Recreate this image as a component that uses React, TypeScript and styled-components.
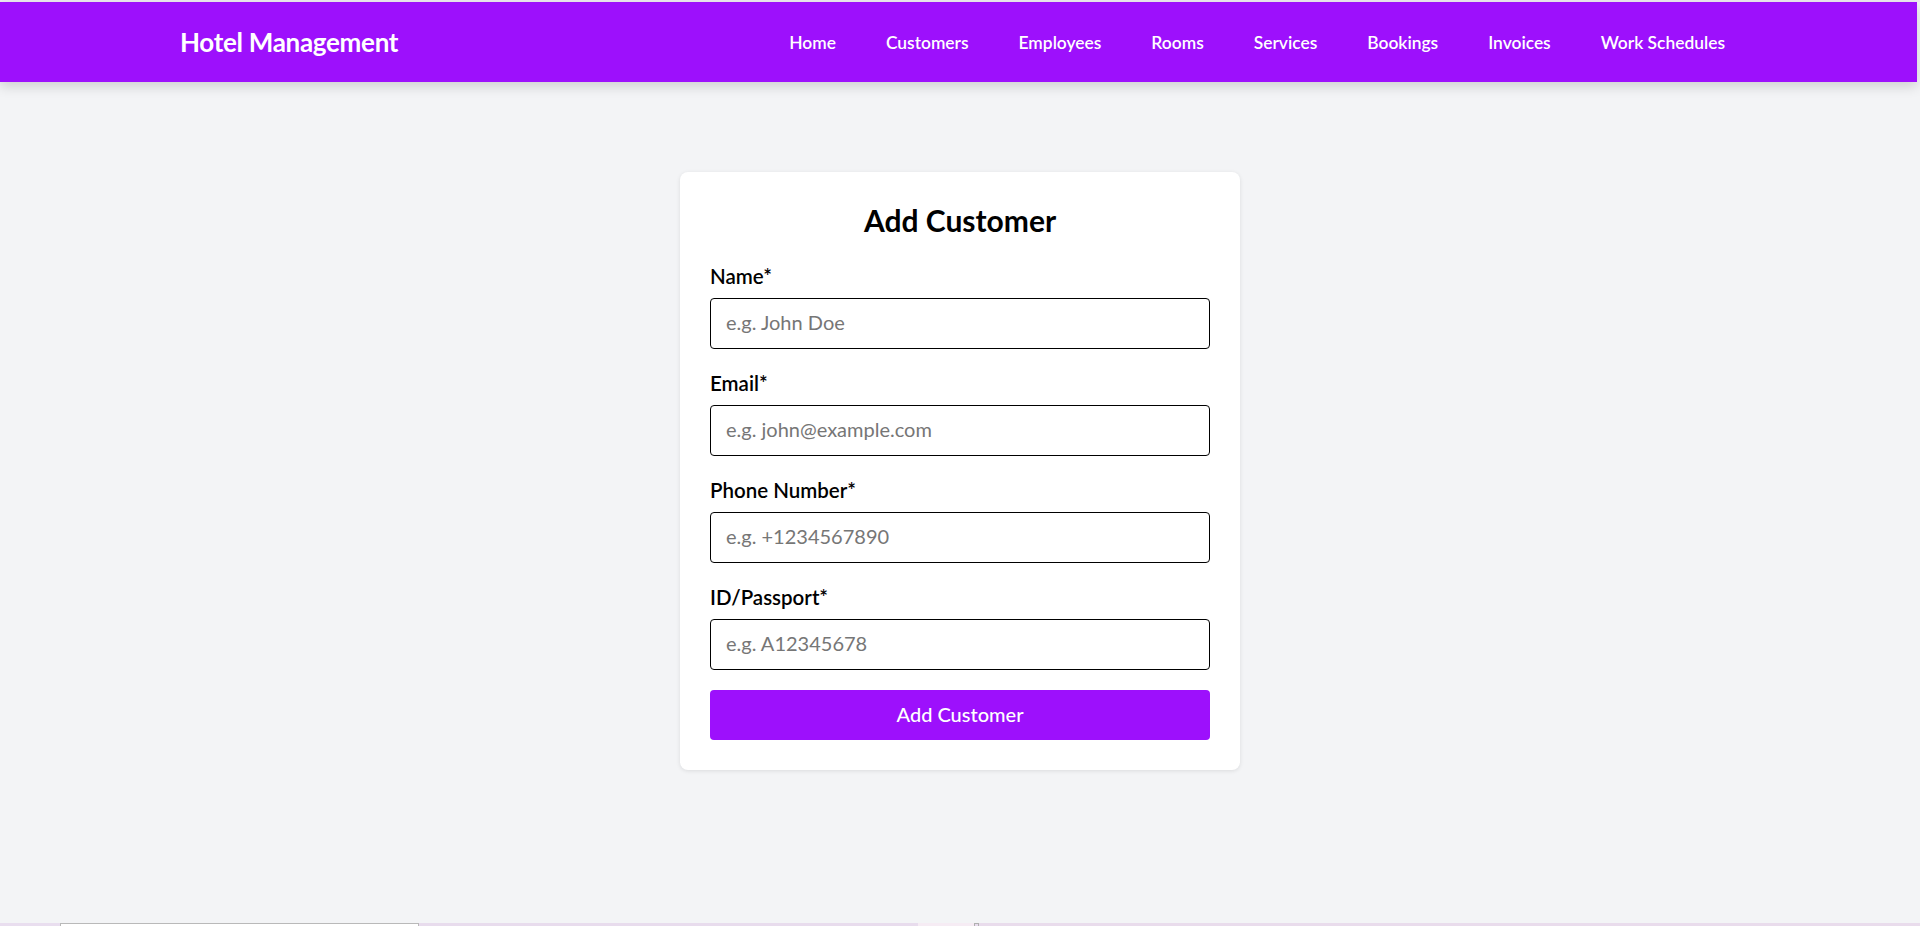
import React from "react";
import styled, { createGlobalStyle } from "styled-components";

const FONT = `"Lato", "Noto Sans", "Liberation Sans", sans-serif`;
const PURPLE = "#9d10fc";

const GlobalStyle = createGlobalStyle`
  html, body {
    margin: 0;
    padding: 0;
    background: #f3f4f6;
    font-family: ${FONT};
    overflow: hidden;
  }
  * { box-sizing: border-box; }
`;

const Page = styled.div`
  height: 926px;
  display: flex;
  flex-direction: column;
  background: #f3f4f6;
  overflow: hidden;
`;

const TopEdge = styled.div`
  height: 2px;
  flex: 0 0 2px;
  background: #eeebf1;
`;

const Header = styled.header`
  height: 80px;
  flex: 0 0 80px;
  margin-right: 3px;
  background: ${PURPLE};
  box-shadow: 0 4px 12px rgba(0, 0, 0, 0.16);
  display: flex;
  align-items: center;
  justify-content: space-between;
  padding: 0 192px 0 180px;
  position: relative;
  z-index: 1;
`;

const Brand = styled.div`
  color: #fff;
  font-size: 26px;
  font-weight: 700;
  letter-spacing: -0.3px;
`;

const Nav = styled.nav`
  display: flex;
  align-items: center;
  gap: 50px;
  padding-top: 2px;
`;

const NavLink = styled.a`
  color: #fff;
  font-size: 17.4px;
  font-weight: 600;
  text-decoration: none;
  line-height: 20px;
`;

const Main = styled.main`
  flex: 1;
  display: flex;
  justify-content: center;
  align-items: flex-start;
  padding-top: 90px;
`;

const Card = styled.div`
  width: 560px;
  background: #fff;
  border-radius: 8px;
  padding: 30px;
  box-shadow: 0 1px 4px rgba(0, 0, 0, 0.1);
`;

const Title = styled.h2`
  margin: 0 0 27px;
  text-align: center;
  font-size: 30px;
  line-height: 37px;
  font-weight: 700;
  color: #000;
`;

const Form = styled.form`
  display: flex;
  flex-direction: column;
`;

const Field = styled.div`
  display: flex;
  flex-direction: column;
  gap: 12px;
  margin-bottom: 24px;
  &:last-of-type {
    margin-bottom: 20px;
  }
`;

const Label = styled.label`
  font-size: 20.5px;
  line-height: 20px;
  font-weight: 600;
  color: #000;
`;

const Input = styled.input`
  height: 51px;
  width: 100%;
  border: 1px solid #000;
  border-radius: 4px;
  padding: 0 15px 4px;
  font-family: ${FONT};
  font-size: 20px;
  color: #000;
  background: #fff;
  outline: none;
  &::placeholder {
    color: #767676;
  }
`;

const Button = styled.button`
  height: 50px;
  width: 100%;
  border: none;
  border-radius: 4px;
  background: ${PURPLE};
  color: #fff;
  font-family: ${FONT};
  font-size: 20px;
  font-weight: 500;
  padding: 0 0 2px;
  cursor: pointer;
`;

const BottomStrip = styled.div`
  height: 3px;
  flex: 0 0 3px;
  display: flex;
`;

const Seg = styled.div<{ $w?: number; $bg: string; $border?: string }>`
  flex: ${(p) => (p.$w ? `0 0 ${p.$w}px` : "1")};
  background: ${(p) => p.$bg};
  border-top: ${(p) => (p.$border ? `1px solid ${p.$border}` : "none")};
  border-left: ${(p) => (p.$border ? `1px solid ${p.$border}` : "none")};
  border-right: ${(p) => (p.$border ? `1px solid ${p.$border}` : "none")};
`;

const navItems = [
  "Home",
  "Customers",
  "Employees",
  "Rooms",
  "Services",
  "Bookings",
  "Invoices",
  "Work Schedules",
];

const fields = [
  { label: "Name*", placeholder: "e.g. John Doe", type: "text" },
  { label: "Email*", placeholder: "e.g. john@example.com", type: "email" },
  { label: "Phone Number*", placeholder: "e.g. +1234567890", type: "tel" },
  { label: "ID/Passport*", placeholder: "e.g. A12345678", type: "text" },
];

export default function App() {
  return (
    <Page>
      <GlobalStyle />
      <TopEdge />
      <Header>
        <Brand>Hotel Management</Brand>
        <Nav>
          {navItems.map((n) => (
            <NavLink key={n} href="#">
              {n}
            </NavLink>
          ))}
        </Nav>
      </Header>
      <Main>
        <Card>
          <Title>Add Customer</Title>
          <Form onSubmit={(e) => e.preventDefault()}>
            {fields.map((f) => (
              <Field key={f.label}>
                <Label>{f.label}</Label>
                <Input type={f.type} placeholder={f.placeholder} />
              </Field>
            ))}
            <Button type="submit">Add Customer</Button>
          </Form>
        </Card>
      </Main>
      <BottomStrip>
        <Seg $w={60} $bg="#e9deef" />
        <Seg $w={359} $bg="#ffffff" $border="#b9b9b9" />
        <Seg $w={499} $bg="#e8dced" />
        <Seg $w={56} $bg="#f6ecf4" />
        <Seg $w={5} $bg="#e8dced" $border="#b0b0b0" />
        <Seg $bg="#e9dcec" />
      </BottomStrip>
    </Page>
  );
}
